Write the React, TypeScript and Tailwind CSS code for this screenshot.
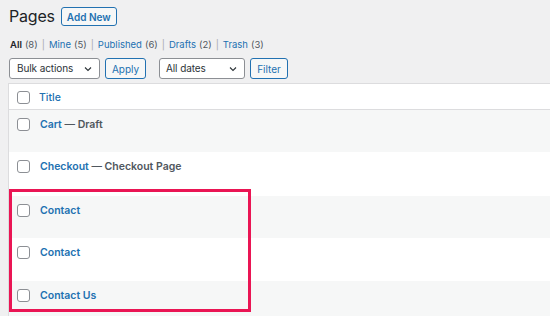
import React from "react";

const Check = () => (
  <span className="block w-[13px] h-[13px] shrink-0 rounded-[3px] border border-[#8c8f94] bg-white" />
);

const Chevron = () => (
  <svg width="10" height="10" viewBox="0 0 20 20" className="shrink-0">
    <path d="M4 7l6 6 6-6" fill="none" stroke="#2c3338" strokeWidth="2.2" />
  </svg>
);

const rows: { title: string; suffix?: string; striped: boolean; h: string }[] = [
  { title: "Cart", suffix: "Draft", striped: true, h: "h-[42px]" },
  { title: "Checkout", suffix: "Checkout Page", striped: false, h: "h-[44px]" },
  { title: "Contact", striped: true, h: "h-[42px]" },
  { title: "Contact", striped: false, h: "h-[43px]" },
  { title: "Contact Us", striped: true, h: "h-[43px]" },
];

const filters = [
  { label: "All", count: 8, current: true },
  { label: "Mine", count: 5 },
  { label: "Published", count: 6 },
  { label: "Drafts", count: 2 },
  { label: "Trash", count: 3 },
];

export default function App() {
  return (
    <div
      className="relative w-[550px] h-[316px] overflow-hidden bg-[#f0f0f1] text-[#3c434a]"
      style={{ fontFamily: "Inter, 'Liberation Sans', sans-serif" }}
    >
      <div className="flex items-center pl-[9px] pt-[7px] h-[19px] box-content">
        <h1 className="text-[16px] leading-[19px] font-normal text-[#1d2327] tracking-[-0.2px]">Pages</h1>
        <button className="ml-[6px] h-[19px] px-[5px] rounded-[3px] border border-[#2271b1] bg-[#f6f7f7] text-[#2271b1] text-[10px] font-semibold leading-none whitespace-nowrap">
          Add New
        </button>
      </div>

      <div className="flex items-center pl-[10px] mt-[12px] h-[14px] text-[9.5px] leading-[14px] whitespace-nowrap">
        {filters.map((f, i) => (
          <React.Fragment key={f.label}>
            {i > 0 && <span className="mx-[4px] text-[#a7aaad]">|</span>}
            <span className={f.current ? "font-semibold text-[#1d2327]" : "text-[#2271b1]"}>{f.label}</span>
            <span className="ml-[3px] text-[#50575e]">({f.count})</span>
          </React.Fragment>
        ))}
      </div>

      <div className="flex items-center pl-[9px] mt-[6px] h-[21px] gap-[5px]">
        <div className="flex items-center justify-between w-[91px] h-[21px] pl-[7px] pr-[6px] rounded-[3px] border border-[#8c8f94] bg-white text-[10px] tracking-[-0.1px] text-[#2c3338] whitespace-nowrap">
          <span>Bulk actions</span>
          <Chevron />
        </div>
        <button className="w-[41px] h-[21px] rounded-[3px] border border-[#2271b1] bg-[#f6f7f7] text-[#2271b1] text-[10px] leading-none">
          Apply
        </button>
        <div className="ml-[8px] flex items-center justify-between w-[86px] h-[21px] pl-[6px] pr-[6px] rounded-[3px] border border-[#8c8f94] bg-white text-[10px] tracking-[-0.1px] text-[#2c3338] whitespace-nowrap">
          <span>All dates</span>
          <Chevron />
        </div>
        <button className="w-[38px] h-[21px] rounded-[3px] border border-[#2271b1] bg-[#f6f7f7] text-[#2271b1] text-[10px] leading-none">
          Filter
        </button>
      </div>

      <div className="ml-[8px] mt-[4px] w-[560px] border border-[#dcdcde] bg-white">
        <div className="flex items-center h-[26px] pt-[2px] border-b border-[#dcdcde] pl-[8px]">
          <Check />
          <span className="ml-[9px] text-[10.5px] text-[#2271b1] font-medium">Title</span>
        </div>
        {rows.map((r, i) => (
          <div
            key={i}
            className={`flex items-start pl-[8px] pt-[8px] ${r.h} ${r.striped ? "bg-[#f6f7f7]" : "bg-white"}`}
          >
            <Check />
            <span className="ml-[10px] text-[10.5px] leading-[13px] font-semibold whitespace-nowrap">
              <span className="text-[#2271b1]">{r.title}</span>
              {r.suffix && <span className="text-[#50575e]"> — {r.suffix}</span>}
            </span>
          </div>
        ))}
      </div>

      <div className="absolute left-[9px] top-[189px] w-[242px] h-[123px] border-[3px] border-[#ea1554] pointer-events-none" />
    </div>
  );
}
